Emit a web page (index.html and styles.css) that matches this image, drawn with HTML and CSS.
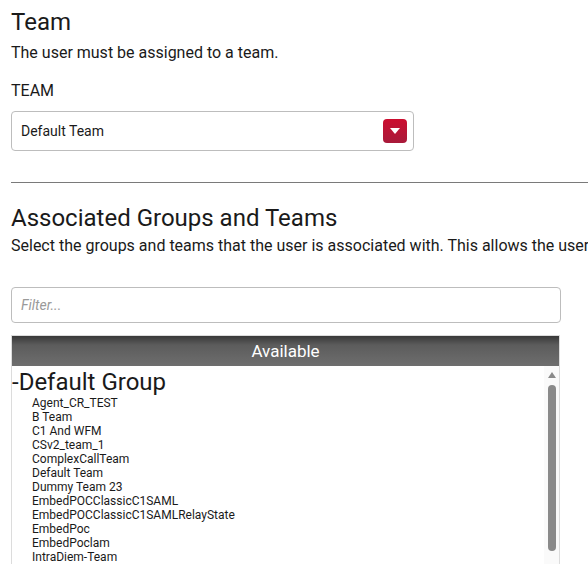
FILE: index.html
```html
<!DOCTYPE html>
<html>
<head>
<meta charset="utf-8">
<link rel="stylesheet" href="styles.css">
</head>
<body>
<div class="page">
  <h2 class="title">Team</h2>
  <p class="desc">The user must be assigned to a team.</p>
  <div class="label">TEAM</div>
  <div class="select">
    <span class="select-text">Default Team</span>
    <span class="select-btn"><svg width="10" height="6" viewBox="0 0 10 6"><path d="M0 0H10L5 6Z" fill="#fff"/></svg></span>
  </div>
  <hr class="divider">
  <h2 class="title2">Associated Groups and Teams</h2>
  <p class="desc2">Select the groups and teams that the user is associated with. This allows the user</p>
  <div class="filter"><span class="placeholder">Filter...</span></div>
  <div class="list">
    <div class="list-head">Available</div>
    <div class="list-body">
      <div class="list-items">
        <div class="group">-Default Group</div>
        <div class="item">Agent_CR_TEST</div>
        <div class="item">B Team</div>
        <div class="item">C1 And WFM</div>
        <div class="item">CSv2_team_1</div>
        <div class="item">ComplexCallTeam</div>
        <div class="item">Default Team</div>
        <div class="item">Dummy Team 23</div>
        <div class="item">EmbedPOCClassicC1SAML</div>
        <div class="item">EmbedPOCClassicC1SAMLRelayState</div>
        <div class="item">EmbedPoc</div>
        <div class="item">EmbedPoclam</div>
        <div class="item">IntraDiem-Team</div>
      </div>
      <div class="scroll">
        <div class="arrow"></div>
        <div class="thumb"></div>
      </div>
    </div>
  </div>
</div>
</body>
</html>
```
FILE: styles.css
```css
html, body {
  margin: 0;
  padding: 0;
  background: #fff;
  overflow: hidden;
  height: 564px;
}
body {
  font-family: Roboto, "Liberation Sans", sans-serif;
  color: #1a1a1a;
}
.page {
  padding: 8px 0 0 11px;
  width: 600px;
}
.title {
  margin: 0;
  font-size: 24px;
  line-height: 28px;
  font-weight: 400;
}
.desc {
  margin: 7px 0 0;
  font-size: 16px;
  line-height: 19px;
}
.label {
  margin-top: 19px;
  font-size: 16px;
  line-height: 19px;
}
.select {
  margin-top: 11px;
  height: 38px;
  border: 1px solid #bdbdbd;
  border-radius: 4px;
  display: flex;
  align-items: center;
  justify-content: space-between;
  padding: 0 6px 0 9px;
  box-sizing: content-box;
  width: 386px;
}
.select-text {
  font-size: 14px;
}
.select-btn {
  width: 24px;
  height: 24px;
  border-radius: 4px;
  background: linear-gradient(#cc0d2f, #a81a3a);
  display: flex;
  align-items: center;
  justify-content: center;
}
.divider {
  margin: 31px 0 0;
  border: 0;
  border-top: 1px solid #7a7a7a;
  height: 0;
  width: 590px;
}
.title2 {
  margin: 21px 0 0;
  font-size: 24px;
  line-height: 28px;
  font-weight: 400;
}
.desc2 {
  margin: 4px 0 0;
  font-size: 16px;
  line-height: 19px;
  white-space: nowrap;
}
.filter {
  margin-top: 32px;
  height: 34px;
  border: 1px solid #bdbdbd;
  border-radius: 4px;
  display: flex;
  align-items: center;
  padding-left: 9px;
  box-sizing: content-box;
  width: 539px;
}
.placeholder {
  font-size: 14px;
  font-style: italic;
  color: #9a9a9a;
}
.list {
  margin-top: 12px;
  width: 547px;
  border: 1px solid #dcdcdc;
  border-bottom: 0;
}
.list-head {
  height: 30px;
  line-height: 30px;
  text-align: center;
  color: #fff;
  font-size: 17px;
  background: linear-gradient(#383838, #5c5c5c 30%, #6e6e6e);
}
.list-body {
  display: flex;
  height: 200px;
}
.list-items {
  flex: 1;
  overflow: hidden;
}
.group {
  font-size: 24px;
  line-height: 28px;
  margin-top: 2px;
}
.item {
  font-size: 12px;
  line-height: 14px;
  padding-left: 20px;
}
.scroll {
  width: 15px;
  background: #fafafa;
  display: flex;
  flex-direction: column;
  align-items: center;
}
.arrow {
  margin-top: 6px;
  width: 0;
  height: 0;
  border-left: 4px solid transparent;
  border-right: 4px solid transparent;
  border-bottom: 6px solid #8a8a8a;
}
.thumb {
  margin-top: 7px;
  width: 8px;
  height: 166px;
  border-radius: 4px;
  background: #8a8a8a;
}
```
